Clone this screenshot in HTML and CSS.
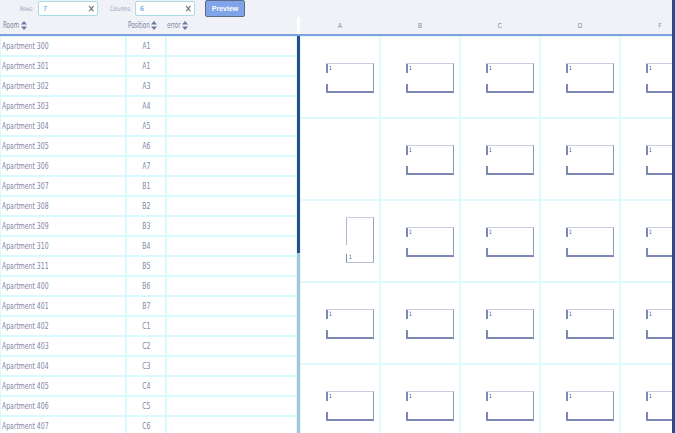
FILE: index.html
```html
<!DOCTYPE html>
<html>
<head>
<meta charset="utf-8">
<link rel="stylesheet" href="styles.css">
</head>
<body>
<div class="page">
  <div class="main">
    <div class="toolbar">
      <span class="lbl lbl-rows"><span class="n">Rows:</span></span>
      <div class="field"><span class="val">7</span><span class="clear">×</span></div>
      <span class="lbl lbl-cols"><span class="n">Columns:</span></span>
      <div class="field"><span class="val">6</span><span class="clear">×</span></div>
      <button class="preview">Preview</button>
    </div>
    <div class="head">
      <div class="lhead">
        <div class="hc c-room"><span class="hn">Room</span><svg class="sort" viewBox="0 0 6 9" width="6" height="9"><path d="M3 0 L6 3.5 L0 3.5 Z M3 9 L6 5.5 L0 5.5 Z"/></svg></div>
        <div class="hc c-pos"><span class="hn">Position</span><svg class="sort" viewBox="0 0 6 9" width="6" height="9"><path d="M3 0 L6 3.5 L0 3.5 Z M3 9 L6 5.5 L0 5.5 Z"/></svg></div>
        <div class="hc c-err"><span class="hn">error</span><svg class="sort" viewBox="0 0 6 9" width="6" height="9"><path d="M3 0 L6 3.5 L0 3.5 Z M3 9 L6 5.5 L0 5.5 Z"/></svg></div>
      </div>
      <div class="hgap"></div>
      <div class="rhead">
        <div class="colh">A</div><div class="colh">B</div><div class="colh">C</div><div class="colh">D</div><div class="colh">F</div>
      </div>
    </div>
    <div class="body">
      <div class="table">
        <div class="row"><div class="c c-room"><span class="t">Apartment 300</span></div><div class="c c-pos"><span class="t">A1</span></div><div class="c c-err"></div></div>
        <div class="row"><div class="c c-room"><span class="t">Apartment 301</span></div><div class="c c-pos"><span class="t">A1</span></div><div class="c c-err"></div></div>
        <div class="row"><div class="c c-room"><span class="t">Apartment 302</span></div><div class="c c-pos"><span class="t">A3</span></div><div class="c c-err"></div></div>
        <div class="row"><div class="c c-room"><span class="t">Apartment 303</span></div><div class="c c-pos"><span class="t">A4</span></div><div class="c c-err"></div></div>
        <div class="row"><div class="c c-room"><span class="t">Apartment 304</span></div><div class="c c-pos"><span class="t">A5</span></div><div class="c c-err"></div></div>
        <div class="row"><div class="c c-room"><span class="t">Apartment 305</span></div><div class="c c-pos"><span class="t">A6</span></div><div class="c c-err"></div></div>
        <div class="row"><div class="c c-room"><span class="t">Apartment 306</span></div><div class="c c-pos"><span class="t">A7</span></div><div class="c c-err"></div></div>
        <div class="row"><div class="c c-room"><span class="t">Apartment 307</span></div><div class="c c-pos"><span class="t">B1</span></div><div class="c c-err"></div></div>
        <div class="row"><div class="c c-room"><span class="t">Apartment 308</span></div><div class="c c-pos"><span class="t">B2</span></div><div class="c c-err"></div></div>
        <div class="row"><div class="c c-room"><span class="t">Apartment 309</span></div><div class="c c-pos"><span class="t">B3</span></div><div class="c c-err"></div></div>
        <div class="row"><div class="c c-room"><span class="t">Apartment 310</span></div><div class="c c-pos"><span class="t">B4</span></div><div class="c c-err"></div></div>
        <div class="row"><div class="c c-room"><span class="t">Apartment 311</span></div><div class="c c-pos"><span class="t">B5</span></div><div class="c c-err"></div></div>
        <div class="row"><div class="c c-room"><span class="t">Apartment 400</span></div><div class="c c-pos"><span class="t">B6</span></div><div class="c c-err"></div></div>
        <div class="row"><div class="c c-room"><span class="t">Apartment 401</span></div><div class="c c-pos"><span class="t">B7</span></div><div class="c c-err"></div></div>
        <div class="row"><div class="c c-room"><span class="t">Apartment 402</span></div><div class="c c-pos"><span class="t">C1</span></div><div class="c c-err"></div></div>
        <div class="row"><div class="c c-room"><span class="t">Apartment 403</span></div><div class="c c-pos"><span class="t">C2</span></div><div class="c c-err"></div></div>
        <div class="row"><div class="c c-room"><span class="t">Apartment 404</span></div><div class="c c-pos"><span class="t">C3</span></div><div class="c c-err"></div></div>
        <div class="row"><div class="c c-room"><span class="t">Apartment 405</span></div><div class="c c-pos"><span class="t">C4</span></div><div class="c c-err"></div></div>
        <div class="row"><div class="c c-room"><span class="t">Apartment 406</span></div><div class="c c-pos"><span class="t">C5</span></div><div class="c c-err"></div></div>
        <div class="row"><div class="c c-room"><span class="t">Apartment 407</span></div><div class="c c-pos"><span class="t">C6</span></div><div class="c c-err"></div></div>
      </div>
      <div class="lscroll"><div class="lthumb"></div></div>
      <div class="grid">
        <div class="cell"><div class="room"><span class="num">1</span></div></div>
        <div class="cell"><div class="room"><span class="num">1</span></div></div>
        <div class="cell"><div class="room"><span class="num">1</span></div></div>
        <div class="cell"><div class="room"><span class="num">1</span></div></div>
        <div class="cell"><div class="room"><span class="num">1</span></div></div>

        <div class="cell"></div>
        <div class="cell"><div class="room"><span class="num">1</span></div></div>
        <div class="cell"><div class="room"><span class="num">1</span></div></div>
        <div class="cell"><div class="room"><span class="num">1</span></div></div>
        <div class="cell"><div class="room"><span class="num">1</span></div></div>

        <div class="cell"><div class="room vroom"><span class="num">1</span></div></div>
        <div class="cell"><div class="room"><span class="num">1</span></div></div>
        <div class="cell"><div class="room"><span class="num">1</span></div></div>
        <div class="cell"><div class="room"><span class="num">1</span></div></div>
        <div class="cell"><div class="room"><span class="num">1</span></div></div>

        <div class="cell"><div class="room"><span class="num">1</span></div></div>
        <div class="cell"><div class="room"><span class="num">1</span></div></div>
        <div class="cell"><div class="room"><span class="num">1</span></div></div>
        <div class="cell"><div class="room"><span class="num">1</span></div></div>
        <div class="cell"><div class="room"><span class="num">1</span></div></div>

        <div class="cell"><div class="room"><span class="num">1</span></div></div>
        <div class="cell"><div class="room"><span class="num">1</span></div></div>
        <div class="cell"><div class="room"><span class="num">1</span></div></div>
        <div class="cell"><div class="room"><span class="num">1</span></div></div>
        <div class="cell"><div class="room"><span class="num">1</span></div></div>
      </div>
    </div>
  </div>
  <div class="rscroll"></div>
</div>
</body>
</html>
```
FILE: styles.css
```css
* { box-sizing: border-box; }
html, body { margin: 0; padding: 0; }
body {
  width: 675px;
  height: 433px;
  overflow: hidden;
  background: #ffffff;
  font-family: "DejaVu Sans Condensed", "Liberation Sans", sans-serif;
  color: #7b84a3;
}
.page { display: flex; width: 675px; height: 433px; }
.main { flex: 1; display: flex; flex-direction: column; min-width: 0; background: #f1f2f7; }
.rscroll { width: 3px; background: #2d4b8a; flex-shrink: 0; }

.toolbar { height: 17px; display: flex; align-items: center; flex-shrink: 0; }
.lbl { font-size: 6.5px; color: #9aa2bb; white-space: nowrap; }
.n { display: inline-block; transform: scaleX(0.78); transform-origin: left center; }
.lbl-rows { margin-left: 20px; width: 18px; }
.lbl-cols { margin-left: 12px; width: 25px; }
.field {
  width: 60px; height: 15px; background: #fff;
  border: 1px solid #a7dde8; border-radius: 2px;
  display: flex; align-items: center; justify-content: space-between;
  padding: 0 2px 0 4px;
}
.val { font-size: 7px; color: #5b93d6; }
.clear { font-size: 10px; color: #4a4f60; line-height: 1; }
.preview {
  margin-left: 10px; width: 40px; height: 17px; align-self: flex-start;
  background: #80a4e7; border: 1px solid #5a6b8c; border-radius: 2px;
  color: #fff; font-family: "Liberation Sans", sans-serif; font-weight: bold; font-size: 7px;
  padding: 0;
}

.head { height: 19px; display: flex; border-bottom: 2px solid #7f9fde; flex-shrink: 0; }
.lhead { width: 297px; display: flex; }
.hc { display: flex; align-items: center; font-size: 8px; color: #7a83a0; padding-left: 3px; white-space: nowrap; }
.hn { display: inline-block; transform: scaleX(0.78); transform-origin: left center; }
.lhead .c-room .hn { margin-right: -4px; }
.lhead .c-pos .hn { margin-right: -7px; }
.lhead .c-err .hn { margin-right: -4px; }
.sort { fill: #6b78a0; margin-left: 2px; }
.hgap { width: 3px; background: #ffffff; }
.rhead { flex: 1; display: flex; overflow: hidden; }
.colh { width: 80px; flex-shrink: 0; text-align: center; font-size: 7px; color: #8a90a8; line-height: 19px; }

.c-room { width: 126px; }
.c-pos { width: 40px; }
.c-err { width: 131px; }
.lhead .c-pos { padding-left: 2px; }
.lhead .c-err { padding-left: 1px; }

.body { flex: 1; display: flex; min-height: 0; background: #fff; }
.table { width: 297px; flex-shrink: 0; display: flex; flex-direction: column; }
.row { display: flex; height: 20px; flex-shrink: 0; }
.c {
  border: 1px solid #d7fafd;
  font-size: 9px;
  display: flex; align-items: center;
  color: #7d86a5;
  white-space: nowrap;
}
.t { display: inline-block; transform: scaleX(0.76); transform-origin: left center; }
.row .c-room { padding-left: 1px; }
.row .c-pos { justify-content: center; }
.row .c-pos .t { transform-origin: center center; }

.lscroll { width: 3px; background: #a8c3da; flex-shrink: 0; }
.lthumb { height: 217px; background: #2c4b8b; }

.grid {
  flex: 1; overflow: hidden;
  display: grid; grid-template-columns: repeat(5, 80px); grid-auto-rows: 82px;
  align-content: start;
}
.cell { border: 1px solid #dbfbfd; padding: 26px 0 0 25px; }
.room {
  width: 48px; height: 30px;
  border-top: 1px solid #c9cee2;
  border-right: 1px solid #8e99c0;
  border-bottom: 2px solid #7c88b6;
  background: linear-gradient(to bottom, #7c88b6 0, #7c88b6 9px, transparent 9px, transparent 20px, #7c88b6 20px) no-repeat left top / 2px 100%;
  padding: 1px 0 0 3px;
  display: flex; align-items: flex-start;
}
.num { font-size: 6px; line-height: 6px; color: #3e4a7e; font-family: "DejaVu Sans Condensed", sans-serif; transform: scaleX(0.8); transform-origin: left; }
.vroom {
  width: 28px; height: 46px; margin: -10px 0 0 20px;
  border-top: 1px solid #c9cee2;
  border-right: 1px solid #9aa4c6;
  border-bottom: 1px solid #b4bbd4;
  background: linear-gradient(to bottom, #b0b8d2 0, #b0b8d2 27px, transparent 27px, transparent 36px, #7c88b6 36px) no-repeat left top / 1px 100%;
  align-items: flex-end;
  padding: 0 0 2px 3px;
}
```
